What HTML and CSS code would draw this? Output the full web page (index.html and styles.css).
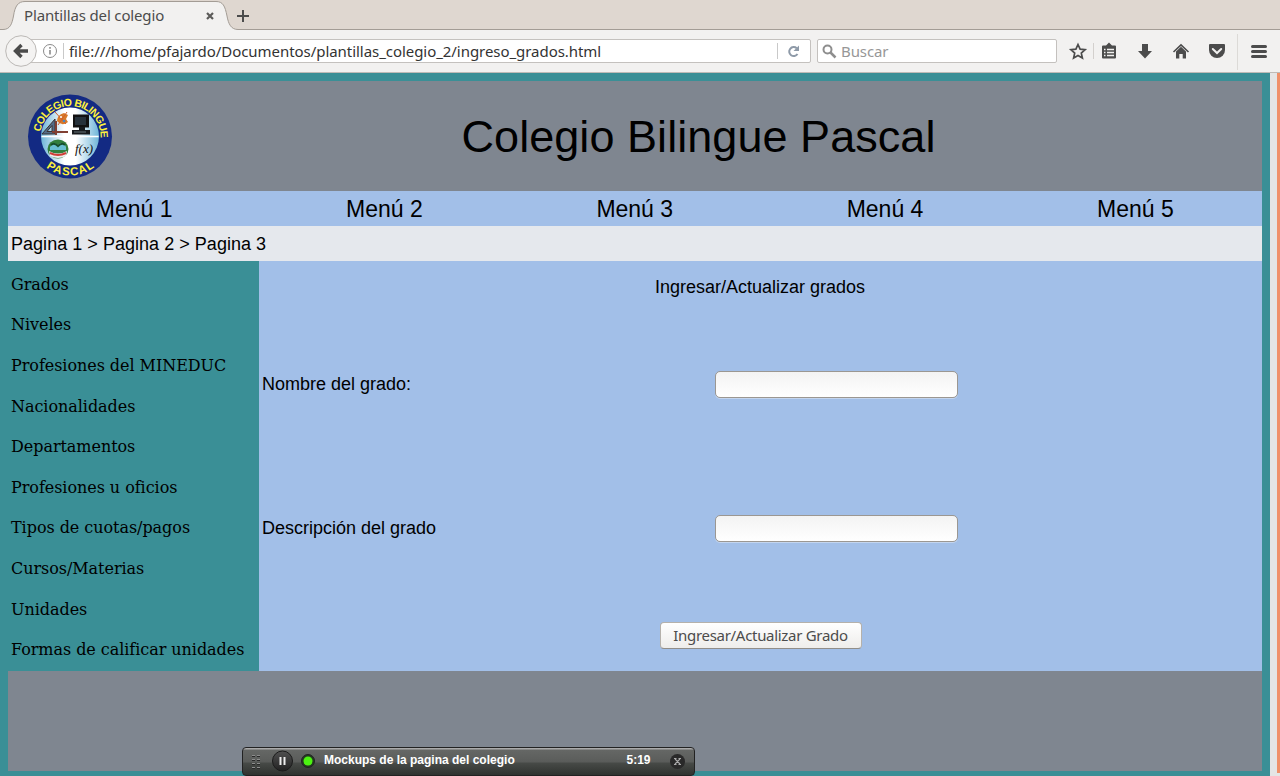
FILE: index.html
```html
<!DOCTYPE html>
<html lang="es">
<head>
<meta charset="utf-8">
<title>Plantillas del colegio</title>
<link rel="stylesheet" href="styles.css">
</head>
<body>
<div class="tabbar">
  <svg class="tab-shape" width="1280" height="31" viewBox="0 0 1280 31">
    <path d="M0 29.500H3C10 29.500 12 24 13.500 16C15 6 18 1.500 25 1.500H216C223 1.500 225 6 227 16C228.500 24 231 29.500 238 29.500H1280V31H0Z" fill="#f2f1f0"/>
    <path d="M0 29.500H3C10 29.500 12 24 13.500 16C15 6 18 1.500 25 1.500H216C223 1.500 225 6 227 16C228.500 24 231 29.500 238 29.500H1280" fill="none" stroke="#a39c95"/>
    <path d="M207 13l6 6M213 13l-6 6" stroke="#5c5b59" stroke-width="2.200"/>
    <path d="M237 16h12M243 10v12" stroke="#4c4c4c" stroke-width="2"/>
  </svg>
  <span class="tab-title">Plantillas del colegio</span>
</div>
<div class="toolbar">
  <div class="back"><svg width="32" height="32" viewBox="0 0 32 32"><circle cx="16" cy="16" r="15.300" fill="#f4f3f2" stroke="#bbb8b5"/><path d="M16.500 10L10.500 16l6 6M11 16h12" fill="none" stroke="#4a4a4a" stroke-width="3.400"/></svg></div>
  <div class="urlbar">
    <svg class="info" width="16" height="16" viewBox="0 0 16 16"><circle cx="8" cy="8" r="6.500" fill="none" stroke="#8b8b8b"/><path d="M8 7v4.500M8 4v1.700" stroke="#8b8b8b" stroke-width="1.600"/></svg>
    <span class="sep"></span>
    <span class="url">file:///home/pfajardo/Documentos/plantillas_colegio_2/ingreso_grados.html</span>
    <span class="sep reload-sep"></span>
    <svg class="reload" width="13" height="13" viewBox="0 0 13 13"><path d="M9.700 3.200A4.500 4.500 0 1 0 10.500 9" fill="none" stroke="#8e9aa8" stroke-width="2"/><path d="M12 0.500V6H6.500Z" fill="#8e9aa8"/></svg>
  </div>
  <div class="search">
    <svg width="15" height="15" viewBox="0 0 15 15"><circle cx="5.500" cy="5.500" r="4" fill="none" stroke="#8e8e8e" stroke-width="2"/><path d="M8.500 8.500l5 5" stroke="#8e8e8e" stroke-width="2.500"/></svg>
    <span class="buscar">Buscar</span>
  </div>
  <svg class="icons" width="223" height="42" viewBox="1057 30 223 42">
    <path d="M1078 44.500l2.100 4.700 5 .5-3.800 3.400 1.100 5-4.400-2.600-4.400 2.600 1.100-5-3.800-3.400 5-.5z" fill="none" stroke="#4c4c4c" stroke-width="1.700"/>
    <path d="M1093.500 43v16" stroke="#d3d0cd"/>
    <path d="M1103 45.500h3l3-3 3 3h3q1 0 1 1v11q0 1-1 1h-12q-1 0-1-1v-11q0-1 1-1z" fill="#4c4c4c"/>
    <path d="M1104 49.500h1.500M1107 49.500h7M1104 52.500h1.500M1107 52.500h7M1104 55.500h1.500M1107 55.500h7" stroke="#f2f1f0" stroke-width="1.700"/>
    <path d="M1142 44h6v7h4l-7 7.500-7-7.500h4z" fill="#4c4c4c"/>
    <path d="M1173.500 52l7.500-7.200 7.500 7.200" fill="none" stroke="#4c4c4c" stroke-width="1.600"/><path d="M1176 51.500l5-4.800 5 4.800v7h-3.300v-4.500h-3.400v4.500h-3.300z" fill="#4c4c4c"/>
    <path d="M1210 44h14q1 0 1 1v5a8 8 0 0 1-16 0v-5q0-1 1-1z" fill="#4c4c4c"/><path d="M1212.800 49l4.200 4 4.200-4" fill="none" stroke="#f2f1f0" stroke-width="2" stroke-linecap="round"/>
    <path d="M1237.500 34v36" stroke="#dcdad7"/>
    <path d="M1252.500 46.500h13M1252.500 51.500h13M1252.500 56.500h13" stroke="#4c4c4c" stroke-width="3" stroke-linecap="round"/>
  </svg>
</div>
<div class="viewport">
  <div class="page">
    <header class="banner">
      <svg class="logo" width="86" height="88" viewBox="27 92 86 88">
        <defs>
          <linearGradient id="sky"><stop offset="0" stop-color="#6eb5d8"/><stop offset=".4" stop-color="#fff"/><stop offset=".6" stop-color="#fff"/><stop offset="1" stop-color="#6eb5d8"/></linearGradient>
          <path id="arc-top" d="M40.400 132A30.500 30.500 0 0 1 70 106A30.500 30.500 0 0 1 100.400 134L101 143"/>
          <path id="arc-bottom" d="M31 136.500A39 39 0 0 0 109 136.500"/>
        </defs>
        <circle cx="70" cy="136.500" r="42" fill="#132a83"/>
        <circle cx="70" cy="136.500" r="29" fill="url(#sky)"/>
        <path d="M42 134l13-15v15zM47 131.500h5v-6z" fill="#526c88" stroke="#3b3030" fill-rule="evenodd"/><path d="M56 135V121M52 132h16" stroke="#803f32" stroke-width="2"/>
        <path d="M57 121q0-6 7-8l4 2-2 4 2 3q-6 5-11-1z" fill="#d87928"/><path d="M55 112l11 12M67 112l-9 13" stroke="#cf5d2d"/><circle cx="61" cy="117" r="1" fill="#fff"/><circle cx="64" cy="121" r="1.300" fill="#4488c5"/>
        <path d="M73 114.500h16v13h-16z" fill="#111"/><path d="M75 117h11v8H75z" fill="#26313a"/><path d="M79 127h6v3h-6zM72 130h18v4.500H72z" fill="#171a1d"/><path d="M74 132h12" stroke="#68757a"/>
        <ellipse cx="58" cy="149" rx="10.500" ry="9.500" fill="#327f3d"/><path d="M50 147q4-6 8-2 5-5 8 2v3H50z" fill="#69bfd2"/><path d="M49 151q9 5 18 0l-1 5q-8 4-16 0z" fill="#eee"/><path d="M50 153q8 4 16 0" fill="none" stroke="#cf3d36" stroke-width="2"/><path d="M51 145q3-3 7 1 4-4 7-1" fill="none" stroke="#174f2b" stroke-width="2"/>
        <path d="M70 108v57M41.500 136.500h57" stroke="#fff" stroke-width="1.500"/>
        <text class="formula" x="75" y="153" textLength="18">f(x)</text>
        <text class="seal"><textPath href="#arc-top" textLength="92">COLEGIO BILINGUE</textPath></text>
        <text class="seal seal-low"><textPath href="#arc-bottom" textLength="52" startOffset="35.500">PASCAL</textPath></text>
      </svg>
      <h1 class="title">Colegio Bilingue Pascal</h1>
    </header>
    <nav class="menu"><a>Menú 1</a><a>Menú 2</a><a>Menú 3</a><a>Menú 4</a><a>Menú 5</a></nav>
    <div class="crumbs">Pagina 1 &gt; Pagina 2 &gt; Pagina 3</div>
    <div class="main">
      <aside class="side"><a>Grados</a><a>Niveles</a><a>Profesiones del MINEDUC</a><a>Nacionalidades</a><a>Departamentos</a><a>Profesiones u oficios</a><a>Tipos de cuotas/pagos</a><a>Cursos/Materias</a><a>Unidades</a><a>Formas de calificar unidades</a></aside>
      <form class="form">
        <div class="form-title">Ingresar/Actualizar grados</div>
        <div class="field"><label>Nombre del grado:</label><input class="input" type="text"></div>
        <div class="field"><label>Descripción del grado</label><input class="input" type="text"></div>
        <div class="actions"><button class="submit" type="button">Ingresar/Actualizar Grado</button></div>
      </form>
    </div>
    <footer class="footer"></footer>
  </div>
  <div class="scrolltrack"></div>
</div>
<div class="recorder">
  <svg width="76" height="28" viewBox="243 747 76 28">
    <defs><linearGradient id="knob" x2="0" y2="1"><stop stop-color="#505050"/><stop offset="1" stop-color="#222"/></linearGradient></defs>
    <path d="M252 755.500h3m2 0h3M252 759.500h3m2 0h3M252 763.500h3m2 0h3M252 767.500h3m2 0h3" stroke="#292929"/><path d="M252 754.500h3m2 0h3M252 758.500h3m2 0h3M252 762.500h3m2 0h3M252 766.500h3m2 0h3" stroke="#8d8d8d"/>
    <circle cx="282.500" cy="760" r="10" fill="url(#knob)" stroke="#1b1b1b"/><path d="M280.500 756v8M284.500 756v8" stroke="#eee" stroke-width="2"/>
    <circle cx="308" cy="760" r="6.500" fill="#243b20" stroke="#222"/><circle cx="308" cy="760" r="4.500" fill="#4cf211"/>
  </svg>
  <span class="rec-title">Mockups de la pagina del colegio</span>
  <span class="rec-time">5:19</span>
  <svg class="rec-close" width="16" height="16" viewBox="0 0 16 16"><circle cx="7.500" cy="7.500" r="7.500" fill="#292929"/><path d="M5 5l5 5m0-5l-5 5M4 4.500h2.500m2 0h2.500M4 10.500h2.500m2 0h2.500" stroke="#aaa" stroke-width="1.100"/></svg>
</div>
</body>
</html>
```
FILE: styles.css
```css
* { box-sizing: border-box; }
body { margin: 0; width: 1280px; height: 776px; overflow: hidden; background: #f2f1f0; font-family: "Liberation Sans", sans-serif; color: #000; }
svg { display: block; flex: none; }
.tabbar { height: 30px; background: #dfd7d0; position: relative; }
.tab-shape { position: absolute; left: 0; top: 0; }
.tab-title { position: absolute; left: 24px; top: 5px; font: 15px/20px "Noto Sans", sans-serif; color: #4c4c4c; white-space: nowrap; letter-spacing: -.15px; }
.toolbar { height: 43px; display: flex; align-items: flex-start; background: #f2f1f0; border-bottom: 1px solid #bfbbb7; position: relative; }
.back { margin: 5px 0 0 5px; z-index: 1; }
.urlbar { margin: 9px 0 0 -8px; width: 782px; height: 24px; background: #fff; border: 1px solid #c4c1be; border-radius: 2px; display: flex; align-items: center; padding-left: 12px; }
.sep { width: 1px; height: 16px; background: #c9c9c9; margin-left: 5px; }
.url { width: 709px; margin-left: 5px; font: 15px/22px "Noto Sans", sans-serif; letter-spacing: -.05px; color: #333; white-space: nowrap; }
.reload-sep { margin-left: -1px; }
.reload { margin-left: 9px; }
.search { margin: 9px 0 0 6px; width: 240px; height: 24px; background: #fff; border: 1px solid #c4c1be; border-radius: 2px; display: flex; align-items: center; padding-left: 4px; gap: 4px; }
.buscar { font: 15px/22px "Noto Sans", sans-serif; letter-spacing: -.1px; color: #979797; }
.viewport { display: flex; height: 703px; background: #e5e5e5; }
.page { width: 1270px; height: 703px; padding: 8px 8px 5px; background: #3a8f96; }
.scrolltrack { width: 3px; height: 700px; margin-left: 7px; background: #f0906a; }
.banner { height: 110px; background: #7f8690; display: flex; align-items: center; padding-left: 19px; }
.title { margin: 0 0 0 22px; padding-top: 2px; width: 1127px; text-align: center; font-weight: 400; font-size: 45px; letter-spacing: .05px; }
.seal { font: bold 10.5px "Liberation Sans", sans-serif; fill: #fff23c; }
.seal-low { font-size: 11.5px; }
.formula { font: italic 13px "Liberation Serif", serif; fill: #111; }
.menu { height: 35px; background: #a2bfe8; display: grid; grid-template-columns: repeat(5, 250.3px); font-size: 23px; line-height: 35px; text-align: center; padding: 1px 0 0 1px; }
.crumbs { height: 35px; background: #e5e8ed; padding: 1px 0 0 3px; font-size: 18px; line-height: 35px; letter-spacing: .03px; }
.main { height: 410px; display: flex; }
.side { width: 251px; padding: 3px 0 1px 3px; display: grid; grid-template-rows: repeat(10, 1fr); align-items: center; font: 16px "DejaVu Serif", serif; letter-spacing: -.05px; white-space: nowrap; }
.form { flex: 1; background: #a2bfe8; padding: 0 3px; font-size: 18px; display: grid; grid-template-rows: 51px 144px 144px 71px; }
.form-title { text-align: center; line-height: 53px; padding-right: 1px; }
.field { display: grid; grid-template-columns: 453px 243px; align-items: center; }
.input { width: 243px; height: 27px; border: 1px solid #9b9792; border-radius: 5px; background: linear-gradient(#f3f3f3, #fff); box-shadow: 0 1px 0 #c3d5ef; }
.actions { display: flex; justify-content: center; align-items: center; }
.submit { width: 202px; height: 27px; padding: 0 0 2px; border: 1px solid #b5b1ab; border-bottom-color: #918e89; border-radius: 4px; background: linear-gradient(#fff, #eeedeb); font: 15px "Noto Sans", sans-serif; letter-spacing: -.3px; color: #4c4c4c; white-space: nowrap; }
.footer { height: 100px; background: #7f8690; }
.recorder { position: absolute; left: 242px; top: 747px; width: 453px; height: 29px; border: 1px solid #222; border-radius: 4px; background: linear-gradient(#aaa 0 1px, #656765 2px, #5a5c5a 14px, #474a47 15px, #303330); display: flex; align-items: center; color: #fff; font: bold 12px/24px "Liberation Sans", sans-serif; white-space: nowrap; }
.rec-title { margin: -3px 0 0 5px; width: 302.5px; }
.rec-time { margin-top: -3px; width: 43px; }
```
